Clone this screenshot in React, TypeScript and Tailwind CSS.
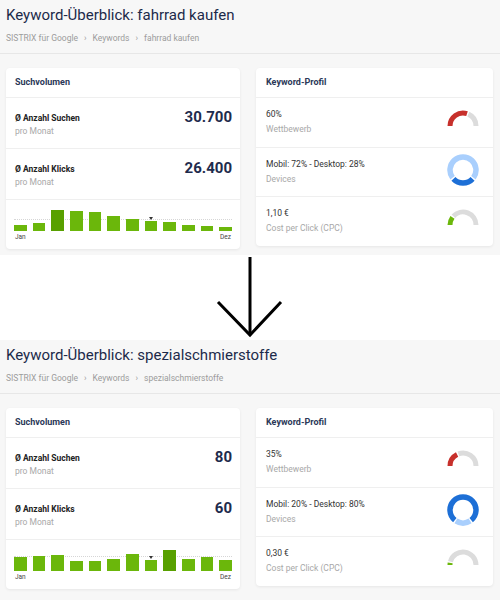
import React from "react";

type Overview = {
  keyword: string;
  searches: string;
  clicks: string;
  bars: number[];
  peak: number;
  competition: number;
  devicesLabel: string;
  devicesBottom: number;
  bottomDark: boolean;
  cpc: string;
  cpcShare: number;
};

const overviews: Overview[] = [
  {
    keyword: "fahrrad kaufen",
    searches: "30.700",
    clicks: "26.400",
    bars: [6, 8, 21, 20, 19, 15, 12, 10, 9, 6, 5, 4],
    peak: 2,
    competition: 0.6,
    devicesLabel: "Mobil: 72% - Desktop: 28%",
    devicesBottom: 0.28,
    bottomDark: true,
    cpc: "1,10 €",
    cpcShare: 0.2,
  },
  {
    keyword: "spezialschmierstoffe",
    searches: "80",
    clicks: "60",
    bars: [14, 15, 16, 10, 10, 12, 17, 11, 21, 12, 14, 11],
    peak: 8,
    competition: 0.35,
    devicesLabel: "Mobil: 20% - Desktop: 80%",
    devicesBottom: 0.2,
    bottomDark: false,
    cpc: "0,30 €",
    cpcShare: 0.05,
  },
];

// Halbkreis-Gauge (links -> oben -> rechts)
const Gauge = ({ value, color }: { value: number; color: string }) => {
  const cx = 17;
  const cy = 16;
  const r = 13;
  const pt = (t: number) => {
    const a = Math.PI * (1 - t);
    return `${cx + r * Math.cos(a)} ${cy - r * Math.sin(a)}`;
  };
  const gap = 0.035;
  const v = Math.max(value, 0.04);
  return (
    <svg width="34" height="18" viewBox="0 0 34 18">
      <path d={`M ${pt(0)} A ${r} ${r} 0 0 1 ${pt(v)}`} fill="none" stroke={color} strokeWidth="5" />
      <path d={`M ${pt(v + gap)} A ${r} ${r} 0 0 1 ${pt(1)}`} fill="none" stroke="#dcdcdc" strokeWidth="5" />
    </svg>
  );
};

const Donut = ({ bottom, bottomDark }: { bottom: number; bottomDark: boolean }) => {
  const c = 16;
  const r = 13;
  const light = "#a9cffd";
  const dark = "#1d6fd6";
  const pt = (deg: number) => {
    const a = (deg * Math.PI) / 180;
    return `${c + r * Math.cos(a)} ${c + r * Math.sin(a)}`;
  };
  const half = bottom * 180;
  const g = 6;
  const s1 = 90 - half + g / 2;
  const e1 = 90 + half - g / 2;
  const s2 = 90 + half + g / 2;
  const e2 = 450 - half - g / 2;
  return (
    <svg width="32" height="32" viewBox="0 0 32 32">
      <path
        d={`M ${pt(s1)} A ${r} ${r} 0 ${e1 - s1 > 180 ? 1 : 0} 1 ${pt(e1)}`}
        fill="none"
        stroke={bottomDark ? dark : light}
        strokeWidth="5.5"
      />
      <path
        d={`M ${pt(s2)} A ${r} ${r} 0 ${e2 - s2 > 180 ? 1 : 0} 1 ${pt(e2)}`}
        fill="none"
        stroke={bottomDark ? light : dark}
        strokeWidth="5.5"
      />
    </svg>
  );
};

const MetricRow = ({ label, value, border }: { label: string; value: string; border?: boolean }) => (
  <div className={`h-[51px] flex justify-between pl-[9px] pr-[8px] ${border ? "border-t border-[#efefef]" : ""}`}>
    <div className="pt-[14px]">
      <div className="text-[8.5px] leading-[12px] font-bold text-[#222]">Ø {label}</div>
      <div className="text-[8.5px] leading-[12px] mt-[1px] text-[#a8a8a8]">pro Monat</div>
    </div>
    <div className="pt-[9px] text-[15px] leading-[20px] font-bold text-[#1e2b4d]">{value}</div>
  </div>
);

const ProfileRow = ({ value, label, children }: { value: string; label: string; children: React.ReactNode }) => (
  <div className="h-[49.5px] border-t border-[#efefef] flex items-center justify-between pl-[10px] pr-[13px]">
    <div>
      <div className="text-[8.5px] leading-[13px] text-[#333]">{value}</div>
      <div className="text-[8.5px] leading-[13px] mt-[2px] text-[#a8a8a8]">{label}</div>
    </div>
    {children}
  </div>
);

const Chart = ({ bars, peak }: { bars: number[]; peak: number }) => {
  const avg = bars.reduce((a, b) => a + b, 0) / bars.length;
  return (
    <div className="h-[50px] border-t border-[#efefef] px-[8px] pt-[9px]">
      <div className="relative h-[22px] flex items-end justify-between">
        <div
          className="absolute left-0 right-0 border-t border-dotted border-[#d6d6d6]"
          style={{ bottom: avg }}
        />
        {bars.map((h, i) => (
          <div key={i} className="relative w-[12.5px]">
            {i === 7 && (
              <div className="absolute left-1/2 -translate-x-1/2 -top-[4px] w-0 h-0 border-l-[2.5px] border-r-[2.5px] border-t-[3px] border-l-transparent border-r-transparent border-t-[#333]" />
            )}
            <div
              className={i === peak ? "bg-[#58a000]" : "bg-[#6bb70b]"}
              style={{ height: h }}
            />
          </div>
        ))}
      </div>
      <div className="flex justify-between text-[6.5px] leading-[10px] mt-[1px] text-[#444] px-[1px]">
        <span>Jan</span>
        <span>Dez</span>
      </div>
    </div>
  );
};

const Panel = ({ o, height }: { o: Overview; height: string }) => (
  <div className={`${height} bg-[#f7f7f7] overflow-hidden`}>
    <div className="pt-[5px] pb-[9px] px-[6px] border-b border-[#e7e7e7]">
      <h1 className="text-[15px] leading-[20px] text-[#1c2a4a]">Keyword-Überblick: {o.keyword}</h1>
      <div className="mt-[7px] text-[8.5px] leading-[12px] text-[#9c9c9c] flex gap-[6px]">
        <span>SISTRIX für Google</span>
        <span>›</span>
        <span>Keywords</span>
        <span>›</span>
        <span>{o.keyword}</span>
      </div>
    </div>

    <div className="flex items-start pl-[6px] pt-[14px] gap-[16px]">
      {/* Suchvolumen */}
      <div className="w-[234px] bg-white rounded-[4px] shadow-[0_1px_3px_rgba(0,0,0,0.07)]">
        <div className="h-[29px] flex items-center pl-[9px] text-[9px] font-bold text-[#2b3858]">Suchvolumen</div>
        <MetricRow label="Anzahl Suchen" value={o.searches} border />
        <MetricRow label="Anzahl Klicks" value={o.clicks} border />
        <Chart bars={o.bars} peak={o.peak} />
      </div>

      {/* Keyword-Profil */}
      <div className="w-[237px] bg-white rounded-[4px] shadow-[0_1px_3px_rgba(0,0,0,0.07)]">
        <div className="h-[29px] flex items-center pl-[10px] text-[9px] font-bold text-[#2b3858]">Keyword-Profil</div>
        <ProfileRow value={`${Math.round(o.competition * 100)}%`} label="Wettbewerb">
          <div className="-mt-[6px]">
            <Gauge value={o.competition} color="#c7302b" />
          </div>
        </ProfileRow>
        <ProfileRow value={o.devicesLabel} label="Devices">
          <div className="-mt-[4px] mr-[1px]">
            <Donut bottom={o.devicesBottom} bottomDark={o.bottomDark} />
          </div>
        </ProfileRow>
        <ProfileRow value={o.cpc} label="Cost per Click (CPC)">
          <div className="-mt-[6px]">
            <Gauge value={o.cpcShare} color="#6bb70b" />
          </div>
        </ProfileRow>
      </div>
    </div>
  </div>
);

export default function App() {
  return (
    <div className="w-[500px] h-[600px] overflow-hidden bg-white" style={{ fontFamily: "Roboto, 'Noto Sans', sans-serif" }}>
      <Panel o={overviews[0]} height="h-[255px]" />

      {/* Pfeil */}
      <div className="h-[85px] flex justify-center">
        <svg width="70" height="85" viewBox="0 0 70 85">
          <line x1="35" y1="2" x2="35" y2="80" stroke="#000" strokeWidth="3" />
          <polyline points="3,47 35,80 66,47" fill="none" stroke="#000" strokeWidth="3" />
        </svg>
      </div>

      <Panel o={overviews[1]} height="h-[260px]" />
    </div>
  );
}
